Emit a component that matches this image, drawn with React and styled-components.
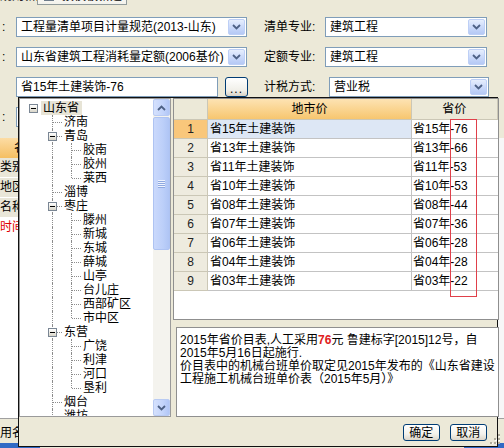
import React from 'react';
import styled, { createGlobalStyle } from 'styled-components';

const GlobalStyle = createGlobalStyle`
  html, body {
    margin: 0;
    padding: 0;
    background: #ece9d8;
  }
  body {
    font-family: "Liberation Sans", "Noto Sans CJK SC", sans-serif;
    font-size: 12px;
    color: #000;
  }
`;

const Page = styled.div`
  position: relative;
  width: 504px;
  height: 448px;
  overflow: hidden;
  background: #ece9d8;
`;

/* ---------- tab strip (mostly scrolled out of view) ---------- */

const TabStrip = styled.div`
  height: 9px;
  display: flex;
  align-items: flex-end;
  overflow: hidden;
`;

const TabFragment = styled.span`
  width: 37px;
  margin-bottom: 6px;
  line-height: 14px;
  white-space: nowrap;
  overflow: hidden;
  color: #222;
`;

const Tab = styled.div`
  box-sizing: border-box;
  width: 90px;
  height: 18px;
  margin-bottom: 4px;
  display: flex;
  align-items: flex-end;
  gap: 8px;
  padding: 0 4px 1px 6px;
  border: 1px solid #919b9c;
  border-top: none;
  background: linear-gradient(#fff, #f3f2ec);
  line-height: 14px;
  white-space: nowrap;
`;

const TabIcon = styled.span`
  width: 10px;
  height: 9px;
  margin-bottom: 2px;
  border: 1px solid #6d7b8a;
  background: #dfe6ee;
`;

/* ---------- form ---------- */

const Form = styled.div`
  display: flex;
  flex-direction: column;
  gap: 10px;
  padding-top: 8px;
`;

const Row = styled.div`
  display: flex;
  align-items: center;
  height: 20px;
`;

const Colon = styled.span`
  box-sizing: border-box;
  width: 16px;
  padding-left: 2px;
  flex: none;
`;

const Label = styled.span`
  width: ${(p) => p.$w}px;
  margin-left: ${(p) => p.$gap}px;
  flex: none;
  white-space: nowrap;
  line-height: 20px;
`;

const Field = styled.div`
  box-sizing: border-box;
  width: ${(p) => p.$w}px;
  height: 20px;
  flex: none;
  display: flex;
  align-items: center;
  padding: 1px;
  border: 1px solid #7f9db9;
  background: #fff;
`;

const FieldText = styled.span`
  flex: 1;
  padding-left: 3px;
  line-height: 16px;
  white-space: nowrap;
  overflow: hidden;
`;

const DropButton = styled.span`
  box-sizing: border-box;
  width: 17px;
  height: 16px;
  flex: none;
  display: flex;
  align-items: center;
  justify-content: center;
  border: 1px solid #bdcff6;
  border-radius: 2px;
  background: linear-gradient(#e6eefd, #c9d8f9 55%, #b5c9f5);
`;

const DotsButton = styled.button`
  box-sizing: border-box;
  width: 23px;
  height: 20px;
  margin-left: 7px;
  flex: none;
  padding: 0 0 2px;
  display: flex;
  align-items: flex-end;
  justify-content: center;
  border: 1px solid #003c74;
  border-radius: 3px;
  background: linear-gradient(#fff, #f0efe8 70%, #d8d2c6);
  font: inherit;
  line-height: 10px;
  letter-spacing: 1px;
`;

/* ---------- content behind the popup ---------- */

const Behind = styled.div`
  display: flex;
  justify-content: space-between;
  height: 280px;
  margin-top: 11px;
`;

const PropGrid = styled.div`
  width: 160px;
  background: #fff;
`;

const PropHead = styled.div`
  height: 20px;
  padding-left: 14px;
  line-height: 20px;
  background: linear-gradient(#fcdcA4, #f5bf62);
`;

const PropRow = styled.div`
  height: 19px;
  line-height: 19px;
  border-bottom: 1px solid #fff;
  background: ${(p) => (p.$alert ? '#fff' : '#e9e6d8')};
  color: ${(p) => (p.$alert ? '#e00000' : '#000')};
  white-space: nowrap;
`;

const SidePanel = styled.div`
  width: 60px;
  background: #f7f7f7;
  border-left: 1px solid #a0a0a0;
`;

const StatusRow = styled.div`
  display: flex;
  justify-content: space-between;
  height: 30px;
  border-top: 1px solid #a0a0a0;
`;

const StatusCell = styled.span`
  width: 40px;
  padding-top: 6px;
  line-height: 16px;
  border-bottom: 6px solid ${(p) => p.$color};
`;

/* ---------- popup ---------- */

const Popup = styled.div`
  position: absolute;
  left: 18px;
  top: 97px;
  box-sizing: border-box;
  width: 480px;
  height: 350px;
  display: grid;
  grid-template-columns: 152px 1fr;
  grid-template-rows: 319px 1fr;
  border: 1px solid #111;
  background: #ece9d8;
`;

const TreeBox = styled.div`
  box-sizing: border-box;
  display: flex;
  border: 1px solid #9a9a9a;
  background: #fff;
  overflow: hidden;
`;

const TreeList = styled.div`
  flex: 1;
  padding: 2px 0 0 4px;
  overflow: hidden;
`;

const TreeRow = styled.div`
  display: flex;
  height: 14px;
`;

const Joint = styled.span`
  position: relative;
  width: 19px;
  height: 14px;
  flex: none;

  &::before {
    content: '';
    display: ${(p) => (p.$v ? 'block' : 'none')};
    position: absolute;
    left: 9px;
    top: 0;
    height: ${(p) => (p.$v === 'corner' ? '7px' : '14px')};
    border-left: 1px dotted #8c8c8c;
  }

  &::after {
    content: '';
    display: ${(p) => (p.$h ? 'block' : 'none')};
    position: absolute;
    left: 10px;
    right: 0;
    top: 7px;
    border-top: 1px dotted #8c8c8c;
  }
`;

const Toggle = styled.span`
  position: absolute;
  z-index: 1;
  left: 5px;
  top: 3px;
  box-sizing: border-box;
  width: 9px;
  height: 9px;
  border: 1px solid #7a8694;
  background: linear-gradient(#fff, #d9d6c9);

  &::after {
    content: '';
    position: absolute;
    left: 1px;
    top: 3px;
    width: 5px;
    height: 1px;
    background: #000;
  }
`;

const NodeLabel = styled.span`
  padding: 0 3px 0 2px;
  margin-left: ${(p) => (p.$root ? '-2px' : '0')};
  line-height: 14px;
  white-space: nowrap;
  background: ${(p) => (p.$selected ? '#e7e4d6' : 'transparent')};
`;

const ScrollBar = styled.div`
  width: 17px;
  flex: none;
  display: flex;
  flex-direction: column;
  background: #f4f3ee;
`;

const ScrollButton = styled.span`
  box-sizing: border-box;
  height: 17px;
  flex: none;
  display: flex;
  align-items: center;
  justify-content: center;
  border: 1px solid #b9cbf3;
  border-radius: 2px;
  background: linear-gradient(90deg, #d5e1fd, #c3d4fb 60%, #b1c6f6);
`;

const ScrollTrack = styled.div`
  flex: 1;
`;

const Thumb = styled.div`
  box-sizing: border-box;
  height: 133px;
  margin-top: 1px;
  display: flex;
  flex-direction: column;
  align-items: center;
  justify-content: center;
  gap: 1px;
  border: 1px solid #aec3f2;
  border-radius: 2px;
  background: linear-gradient(90deg, #cad9fc, #bccff9 60%, #afc5f5);
`;

const Grip = styled.span`
  width: 7px;
  height: 1px;
  background: #eef3fe;
  box-shadow: 0 1px 0 #8fa9e0;
`;

const RightCol = styled.div`
  display: flex;
  flex-direction: column;
  gap: 7px;
  padding-left: 2px;
  padding-right: 3px;
`;

const GridBox = styled.div`
  position: relative;
  box-sizing: border-box;
  height: 222px;
  border: 1px solid #8f8f8f;
  background: #fff;
  overflow: hidden;
`;

const Table = styled.div`
  display: grid;
  grid-template-columns: 34px 204px 1fr;
  grid-template-rows: 21px;
  grid-auto-rows: 19px;
`;

const HeadCell = styled.div`
  box-sizing: border-box;
  text-align: center;
  line-height: 20px;
  border-right: 1px solid #cbc7b6;
  border-bottom: 1px solid #cbc7b6;
  background: ${(p) => (p.$active ? 'linear-gradient(#fde3b3, #f7c66f)' : '#ece9d8')};
`;

const RowHead = styled.div`
  box-sizing: border-box;
  text-align: center;
  line-height: 18px;
  color: #222;
  border-right: 1px solid #cbc7b6;
  border-bottom: 1px solid #cbc7b6;
  background: ${(p) => (p.$active ? '#f9c77b' : '#eeebdf')};
`;

const Cell = styled.div`
  box-sizing: border-box;
  padding-left: ${(p) => (p.$last ? '1px' : '2px')};
  line-height: 18px;
  white-space: nowrap;
  border-bottom: 1px solid #c3c3c3;
  border-right: ${(p) => (p.$last ? 'none' : '1px solid #c3c3c3')};
  background: ${(p) => (p.$active ? '#dde7f5' : '#fff')};
`;

const Marker = styled.div`
  position: absolute;
  left: 276px;
  top: 20px;
  box-sizing: border-box;
  width: 27px;
  height: 178px;
  border: 1px solid #e0404a;
  pointer-events: none;
`;

const NoteBox = styled.div`
  box-sizing: border-box;
  height: 90px;
  margin-left: 3px;
  padding: 6px 3px;
  border: 1px solid #8f8f8f;
  background: #fff;
  line-height: 13px;
  white-space: nowrap;
`;

const Strong = styled.b`
  color: #e02020;
`;

const ButtonBar = styled.div`
  position: relative;
  grid-column: 1 / -1;
  display: flex;
  justify-content: flex-end;
  align-items: flex-start;
  gap: 10px;
  padding: 7px 15px 0 0;
`;

const DialogButton = styled.button`
  box-sizing: border-box;
  width: 37px;
  height: 17px;
  padding: 0;
  border: 1px solid #003c74;
  border-radius: 3px;
  background: linear-gradient(#fff, #f3f2ec 60%, #dcd6ca);
  font: inherit;
  line-height: 14px;
  color: #000;
`;

const SizeGrip = styled.svg`
  position: absolute;
  right: 2px;
  bottom: 2px;
`;

const Chevron = ({ up }) => (
  <svg width="9" height="6" viewBox="0 0 9 6">
    <path
      d={up ? 'M1 5 L4.5 1.5 L8 5' : 'M1 1 L4.5 4.5 L8 1'}
      fill="none"
      stroke="#4d6185"
      strokeWidth="1.8"
    />
  </svg>
);

const tree = [
  { label: '山东省', level: 0, open: true, selected: true },
  { label: '济南', level: 1 },
  { label: '青岛', level: 1, open: true },
  { label: '胶南', level: 2 },
  { label: '胶州', level: 2 },
  { label: '莱西', level: 2, last: true },
  { label: '淄博', level: 1 },
  { label: '枣庄', level: 1, open: true },
  { label: '滕州', level: 2 },
  { label: '新城', level: 2 },
  { label: '东城', level: 2 },
  { label: '薛城', level: 2 },
  { label: '山亭', level: 2 },
  { label: '台儿庄', level: 2 },
  { label: '西部矿区', level: 2 },
  { label: '市中区', level: 2, last: true },
  { label: '东营', level: 1, open: true },
  { label: '广饶', level: 2 },
  { label: '利津', level: 2 },
  { label: '河口', level: 2 },
  { label: '垦利', level: 2, last: true },
  { label: '烟台', level: 1 },
  { label: '潍坊', level: 1 },
  { label: '济宁', level: 1 },
];

const prices = [
  ['省15年土建装饰', '省15年-76'],
  ['省13年土建装饰', '省13年-66'],
  ['省11年土建装饰', '省11年-53'],
  ['省10年土建装饰', '省10年-53'],
  ['省08年土建装饰', '省08年-44'],
  ['省07年土建装饰', '省07年-36'],
  ['省06年土建装饰', '省06年-28'],
  ['省04年土建装饰', '省04年-28'],
  ['省03年土建装饰', '省03年-22'],
];

const TreeNode = ({ node }) => (
  <TreeRow>
    {node.level === 0 ? (
      <Joint>{node.open && <Toggle />}</Joint>
    ) : (
      <>
        <Joint />
        {node.level === 2 && <Joint $v="through" />}
        <Joint $v={node.last ? 'corner' : 'tee'} $h>
          {node.open && <Toggle />}
        </Joint>
      </>
    )}
    <NodeLabel $selected={node.selected} $root={node.level === 0}>
      {node.label}
    </NodeLabel>
  </TreeRow>
);

const App = () => (
  <Page>
    <GlobalStyle />

    <TabStrip>
      <TabFragment>规则新建</TabFragment>
      <Tab>
        <TabIcon />
        按模板新建
      </Tab>
    </TabStrip>

    <Form>
      <Row>
        <Colon>:</Colon>
        <Field $w={231}>
          <FieldText>工程量清单项目计量规范(2013-山东)</FieldText>
          <DropButton>
            <Chevron />
          </DropButton>
        </Field>
        <Label $w={61} $gap={17}>
          清单专业:
        </Label>
        <Field $w={162}>
          <FieldText>建筑工程</FieldText>
          <DropButton>
            <Chevron />
          </DropButton>
        </Field>
      </Row>

      <Row>
        <Colon>:</Colon>
        <Field $w={231}>
          <FieldText>山东省建筑工程消耗量定额(2006基价)</FieldText>
          <DropButton>
            <Chevron />
          </DropButton>
        </Field>
        <Label $w={61} $gap={17}>
          定额专业:
        </Label>
        <Field $w={162}>
          <FieldText>建筑工程</FieldText>
          <DropButton>
            <Chevron />
          </DropButton>
        </Field>
      </Row>

      <Row>
        <Colon />
        <Field $w={202}>
          <FieldText>省15年土建装饰-76</FieldText>
        </Field>
        <DotsButton>...</DotsButton>
        <Label $w={65} $gap={16}>
          计税方式:
        </Label>
        <Field $w={160}>
          <FieldText>营业税</FieldText>
          <DropButton>
            <Chevron />
          </DropButton>
        </Field>
      </Row>

      <Row>
        <Colon>:</Colon>
        <Field $w={231}>
          <FieldText />
        </Field>
      </Row>
    </Form>

    <Behind>
      <PropGrid>
        <PropHead>名称</PropHead>
        <PropRow>类别</PropRow>
        <PropRow>地区</PropRow>
        <PropRow>名称</PropRow>
        <PropRow $alert>时间</PropRow>
      </PropGrid>
      <SidePanel />
    </Behind>

    <StatusRow>
      <StatusCell $color="#316ac5">用名</StatusCell>
      <StatusCell $color="#316ac5" />
    </StatusRow>

    <Popup>
      <TreeBox>
        <TreeList>
          {tree.map((node) => (
            <TreeNode key={node.label} node={node} />
          ))}
        </TreeList>
        <ScrollBar>
          <ScrollButton>
            <Chevron up />
          </ScrollButton>
          <ScrollTrack>
            <Thumb>
              <Grip />
              <Grip />
              <Grip />
              <Grip />
            </Thumb>
          </ScrollTrack>
          <ScrollButton>
            <Chevron />
          </ScrollButton>
        </ScrollBar>
      </TreeBox>

      <RightCol>
        <GridBox>
          <Table>
            <HeadCell />
            <HeadCell $active>地市价</HeadCell>
            <HeadCell>省价</HeadCell>
            {prices.map(([city, province], i) => (
              <React.Fragment key={city}>
                <RowHead $active={i === 0}>{i + 1}</RowHead>
                <Cell $active={i === 0}>{city}</Cell>
                <Cell $last>{province}</Cell>
              </React.Fragment>
            ))}
          </Table>
          <Marker />
        </GridBox>

        <NoteBox>
          2015年省价目表,人工采用<Strong>76</Strong>元 鲁建标字[2015]12号，自
          <br />
          2015年5月16日起施行.
          <br />
          价目表中的机械台班单价取定见2015年发布的《山东省建设
          <br />
          工程施工机械台班单价表（2015年5月）》
        </NoteBox>
      </RightCol>

      <ButtonBar>
        <DialogButton>确定</DialogButton>
        <DialogButton>取消</DialogButton>
        <SizeGrip width="10" height="10" viewBox="0 0 10 10">
          {[
            [8, 0],
            [4, 4],
            [8, 4],
            [0, 8],
            [4, 8],
            [8, 8],
          ].map(([x, y]) => (
            <g key={`${x}-${y}`}>
              <rect x={x + 1} y={y + 1} width="2" height="2" fill="#fff" />
              <rect x={x} y={y} width="2" height="2" fill="#b0ac9c" />
            </g>
          ))}
        </SizeGrip>
      </ButtonBar>
    </Popup>
  </Page>
);

export default App;
